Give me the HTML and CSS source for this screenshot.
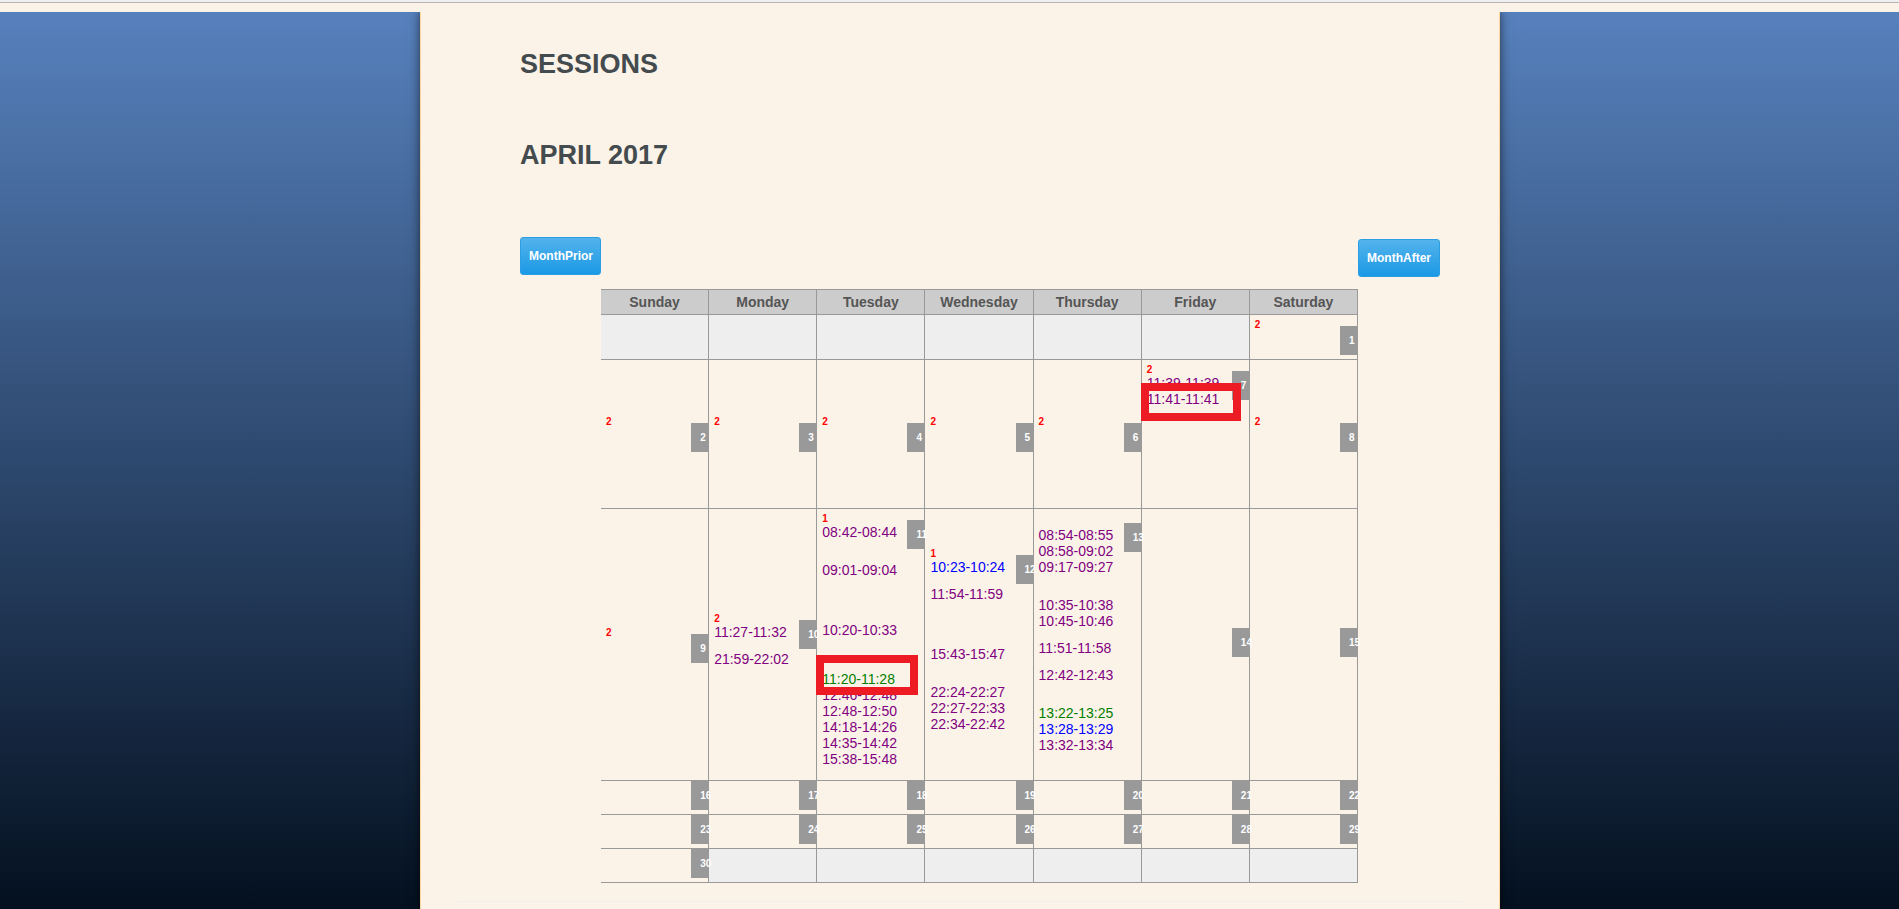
FILE: index.html
```
<!DOCTYPE html>
<html lang="en">
<head>
<meta charset="utf-8">
<title>Sessions</title>
<link rel="stylesheet" href="styles.css">
</head>
<body>
<div class="topbar"></div>
<div class="backdrop">
<main class="page">
<div class="content">
<h1 class="title">SESSIONS</h1>
<h2 class="title">APRIL 2017</h2>
<div class="planner">
<button type="button" class="btn prior">MonthPrior</button>
<button type="button" class="btn after">MonthAfter</button>
<table class="calendar">
<thead>
<tr><th>Sunday</th><th>Monday</th><th>Tuesday</th><th>Wednesday</th><th>Thursday</th><th>Friday</th><th>Saturday</th></tr>
</thead>
<tbody>
<tr>
<td class="blank"></td><td class="blank"></td><td class="blank"></td><td class="blank"></td><td class="blank"></td><td class="blank"></td>
<td><div class="day logged"><div class="log"><div class="count">2</div></div><div class="num">1</div></div></td>
</tr>
<tr>
<td><div class="day logged"><div class="log"><div class="count">2</div></div><div class="num">2</div></div></td>
<td><div class="day logged"><div class="log"><div class="count">2</div></div><div class="num">3</div></div></td>
<td><div class="day logged"><div class="log"><div class="count">2</div></div><div class="num">4</div></div></td>
<td><div class="day logged"><div class="log"><div class="count">2</div></div><div class="num">5</div></div></td>
<td><div class="day logged"><div class="log"><div class="count">2</div></div><div class="num">6</div></div></td>
<td><div class="day logged"><div class="log"><div class="count">2</div>
<ul class="times">
<li>11:39-11:39</li>
<li class="marked tail-8">11:41-11:41<span class="frame"></span></li>
</ul></div><div class="num">7</div></div></td>
<td><div class="day logged"><div class="log"><div class="count">2</div></div><div class="num">8</div></div></td>
</tr>
<tr>
<td><div class="day logged"><div class="log"><div class="count">2</div></div><div class="num">9</div></div></td>
<td><div class="day logged"><div class="log"><div class="count">2</div>
<ul class="times">
<li>11:27-11:32</li>
<li class="gap-1">21:59-22:02</li>
</ul></div><div class="num">10</div></div></td>
<td><div class="day logged"><div class="log"><div class="count">1</div>
<ul class="times">
<li>08:42-08:44</li>
<li class="gap-2">09:01-09:04</li>
<li class="gap-4">10:20-10:33</li>
<li class="gap-3 green marked">11:20-11:28<span class="frame frame-high"></span></li>
<li>12:46-12:48</li>
<li>12:48-12:50</li>
<li>14:18-14:26</li>
<li>14:35-14:42</li>
<li>15:38-15:48</li>
</ul></div><div class="num">11</div></div></td>
<td><div class="day logged"><div class="log"><div class="count">1</div>
<ul class="times">
<li class="blue">10:23-10:24</li>
<li class="gap-1">11:54-11:59</li>
<li class="gap-4">15:43-15:47</li>
<li class="gap-2">22:24-22:27</li>
<li>22:27-22:33</li>
<li>22:34-22:42</li>
</ul></div><div class="num">12</div></div></td>
<td><div class="day logged"><div class="log"><div class="count"></div>
<ul class="times">
<li>08:54-08:55</li>
<li>08:58-09:02</li>
<li>09:17-09:27</li>
<li class="gap-2">10:35-10:38</li>
<li>10:45-10:46</li>
<li class="gap-1">11:51-11:58</li>
<li class="gap-1">12:42-12:43</li>
<li class="gap-2 green">13:22-13:25</li>
<li class="blue">13:28-13:29</li>
<li class="tail-1">13:32-13:34</li>
</ul></div><div class="num">13</div></div></td>
<td><div class="day"><div class="num">14</div></div></td>
<td><div class="day"><div class="num">15</div></div></td>
</tr>
<tr>
<td><div class="day"><div class="num">16</div></div></td>
<td><div class="day"><div class="num">17</div></div></td>
<td><div class="day"><div class="num">18</div></div></td>
<td><div class="day"><div class="num">19</div></div></td>
<td><div class="day"><div class="num">20</div></div></td>
<td><div class="day"><div class="num">21</div></div></td>
<td><div class="day"><div class="num">22</div></div></td>
</tr>
<tr>
<td><div class="day"><div class="num">23</div></div></td>
<td><div class="day"><div class="num">24</div></div></td>
<td><div class="day"><div class="num">25</div></div></td>
<td><div class="day"><div class="num">26</div></div></td>
<td><div class="day"><div class="num">27</div></div></td>
<td><div class="day"><div class="num">28</div></div></td>
<td><div class="day"><div class="num">29</div></div></td>
</tr>
<tr>
<td><div class="day"><div class="num">30</div></div></td>
<td class="blank"></td><td class="blank"></td><td class="blank"></td><td class="blank"></td><td class="blank"></td><td class="blank"></td>
</tr>
</tbody>
</table>
</div>
</div>
<hr class="rule">
</main>
</div>
</body>
</html>
```
FILE: styles.css
```
* {
  box-sizing: border-box;
}

body {
  display: flex;
  flex-direction: column;
  min-height: 100vh;
  margin: 0;
  background: #fcf3e8;
  color: #555;
  font-family: "Liberation Sans", Arial, sans-serif;
  font-size: 14px;
  line-height: 16px;
}

.topbar {
  height: 3px;
  margin-bottom: 9px;
  background: #f0f0f0;
  border-bottom: 1px solid #b6b4b6;
}

.backdrop {
  display: flex;
  flex: 1;
  padding-left: 21px;
  background: linear-gradient(#5781bd, #04101f);
  overflow: hidden;
}

.page {
  width: 100%;
  max-width: 1080px;
  margin: 0 auto;
  padding-bottom: 7px;
  background: #fcf3e8;
  border: solid #fbd59b;
  border-width: 0 1px;
  box-shadow: 0 0 10px rgba(0, 0, 0, 0.6);
}

.content {
  padding: 37px 59px 0 99px;
}

.title {
  margin: 0 0 61px;
  color: #444b4e;
  font-size: 27px;
  line-height: 30px;
  font-weight: bold;
}

.planner {
  display: grid;
  grid-template-columns: auto 1fr auto;
  row-gap: 12px;
  padding-top: 6px;
}

.btn {
  height: 38px;
  padding: 0 8px;
  border: 1px solid #2c9fe4;
  border-radius: 3px;
  background: linear-gradient(#53b3ec, #1b99e5);
  color: #fff;
  font: bold 12px/16px "Liberation Sans", Arial, sans-serif;
}

.prior {
  width: 81px;
}

.after {
  grid-column: 3;
  margin-top: 2px;
}

.calendar {
  grid-column: 2;
  width: 100%;
  border-spacing: 0;
  table-layout: fixed;
}

.calendar th {
  height: 26px;
  padding: 0;
  background: #ccc;
  border: solid #999;
  border-width: 1px 1px 1px 0;
  font-size: 14px;
}

.calendar td {
  padding: 0 5px;
  border: solid #999;
  border-width: 0 1px 1px 0;
  vertical-align: middle;
}

.calendar .blank {
  height: 34px;
  background: #eee;
}

.day {
  display: flex;
  justify-content: flex-end;
  align-items: flex-start;
  padding-bottom: 4px;
}

.logged {
  padding-top: 4px;
}

.log {
  flex: 1;
  min-width: 0;
  white-space: nowrap;
}

.count {
  height: 11px;
  color: #f00;
  font-size: 10px;
  line-height: 11px;
  font-weight: bold;
}

.num {
  width: 18px;
  height: 29px;
  margin-right: -6px;
  padding-left: 9px;
  background: #999;
  color: #fff;
  font-size: 10px;
  line-height: 29px;
  font-weight: bold;
}

.logged .num {
  margin-top: 7px;
}

.times {
  margin: 0;
  padding: 0 0 9px;
  list-style: none;
  color: #800080;
}

.green {
  color: #008000;
}

.blue {
  color: #00f;
}

.gap-1 {
  margin-top: 11px;
}

.gap-2 {
  margin-top: 22px;
}

.gap-3 {
  margin-top: 33px;
}

.gap-4 {
  margin-top: 44px;
}

.tail-1 {
  margin-bottom: 11px;
}

.tail-8 {
  margin-bottom: 88px;
}

.marked {
  position: relative;
}

.frame {
  position: absolute;
  z-index: 1;
  top: -8px;
  left: -6px;
  width: 100px;
  height: 38px;
  border: 8px solid #ed1c24;
}

.frame-high {
  top: -16px;
  width: 102px;
  height: 40px;
}

.rule {
  margin: 18px 36px 0;
  border: 0;
  border-top: 1px solid #eee;
}
```
